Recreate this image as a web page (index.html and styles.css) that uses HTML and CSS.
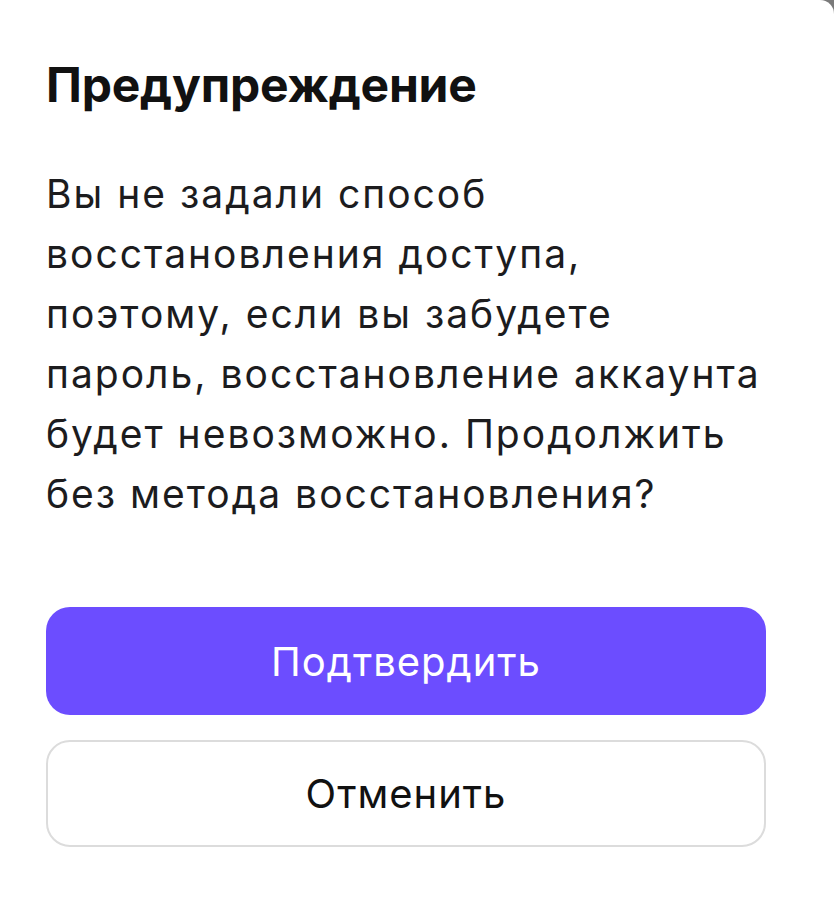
FILE: index.html
```html
<!DOCTYPE html>
<html lang="ru">
<head>
<meta charset="utf-8">
<link rel="stylesheet" href="styles.css">
</head>
<body>
<div class="screen">
  <div class="dialog">
    <h1 class="title">Предупреждение</h1>
    <p class="message">Вы не задали способ<br>восстановления доступа,<br>поэтому, если вы забудете<br>пароль, восстановление аккаунта<br>будет невозможно. Продолжить<br>без метода восстановления?</p>
    <div class="actions">
      <button class="btn btn-primary">Подтвердить</button>
      <button class="btn btn-secondary">Отменить</button>
    </div>
  </div>
</div>
</body>
</html>
```
FILE: styles.css
```css
html {
  background: #7a7a7a;
}
body {
  margin: 0;
  font-family: Inter, "Noto Sans", sans-serif;
}
.screen {
  background: #ffffff;
  min-height: 898px;
  border-top-right-radius: 14px;
  box-sizing: border-box;
  padding: 56px 68px 0 46px;
}
.dialog {
  width: 720px;
  display: flex;
  flex-direction: column;
}
.title {
  margin: 0;
  font-size: 48px;
  line-height: 58px;
  font-weight: 700;
  color: #111111;
  letter-spacing: -0.2px;
}
.message {
  margin: 50px 0 0;
  font-size: 39px;
  line-height: 60px;
  font-weight: 400;
  color: #1c1c1e;
  letter-spacing: 2px;
  white-space: nowrap;
}
.actions {
  margin-top: 83px;
  display: flex;
  flex-direction: column;
  gap: 25px;
}
.btn {
  font-family: Inter, "Noto Sans", sans-serif;
  font-size: 40px;
  font-weight: 400;
  letter-spacing: 1px;
  border-radius: 24px;
  width: 720px;
  cursor: pointer;
}
.btn-primary {
  height: 108px;
  background: #6c4dff;
  color: #ffffff;
  border: none;
}
.btn-secondary {
  height: 107px;
  background: #ffffff;
  color: #111111;
  border: 2px solid #dcdcdc;
}
```
